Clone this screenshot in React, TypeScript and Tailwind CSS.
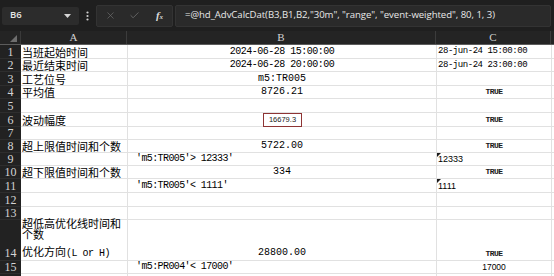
import React from 'react';
import { X, Check } from 'lucide-react';

type Row = {
  h: string;
  a?: React.ReactNode;
  b?: React.ReactNode;
  c?: React.ReactNode;
  end?: boolean;
  noNum?: boolean;
};

const cjk = "font-['Noto_Sans_CJK_SC',sans-serif]";
const mono = "font-['Liberation_Mono',monospace]";

// centred value in column B
const Val = ({ children }: { children: React.ReactNode }) => (
  <span className={`${mono} text-[10px] leading-[12px] w-full text-center text-black`}>{children}</span>
);

// date text in column B
const DateB = ({ children }: { children: React.ReactNode }) => (
  <span className={`${mono} text-[10px] leading-[12px] tracking-[-0.5px] w-full text-center text-black`}>{children}</span>
);

// condition text in column B
const Cond = ({ children }: { children: React.ReactNode }) => (
  <span className={`${mono} text-[10px] leading-[12px] tracking-[-0.6px] pl-[8px] text-black`}>{children}</span>
);

const DateC = ({ children }: { children: React.ReactNode }) => (
  <span className={`${mono} text-[9px] leading-[11px] tracking-[-0.45px] pl-[1px] text-black`}>{children}</span>
);

const True = () => (
  <span className={`${mono} text-[8px] leading-[10px] font-bold tracking-[-0.5px] w-full text-center text-[#1a1a1a]`}>TRUE</span>
);

// number stored as text, with the small error mark
const Flagged = ({ children }: { children: React.ReactNode }) => (
  <span className="relative w-full h-full flex items-end">
    <span className="absolute left-0 top-0 w-0 h-0 border-t-[4px] border-t-[#1a1a1a] border-r-[4px] border-r-transparent" />
    <span className="font-['Liberation_Sans',sans-serif] text-[9px] pl-[1px] leading-[11px] text-black">{children}</span>
  </span>
);

const rows: Row[] = [
  { h: 'h-[14px]', a: '当班起始时间', b: <DateB>2024-06-28 15:00:00</DateB>, c: <DateC>28-jun-24 15:00:00</DateC> },
  { h: 'h-[13px]', a: '最近结束时间', b: <DateB>2024-06-28 20:00:00</DateB>, c: <DateC>28-jun-24 23:00:00</DateC> },
  { h: 'h-[14px]', a: '工艺位号', b: <Val>m5:TR005</Val> },
  { h: 'h-[13px]', a: '平均值', b: <Val>8726.21</Val>, c: <True /> },
  { h: 'h-[14px]' },
  {
    h: 'h-[14px]',
    a: '波动幅度',
    b: (
      <span className="w-full flex justify-center">
        <span className="ml-[1px] w-[39px] h-[14px] border-[1.5px] border-[#8e3434] flex items-center justify-center font-['Liberation_Sans',sans-serif] text-[7.5px] text-[#222]">
          16679.3
        </span>
      </span>
    ),
    c: <True />,
  },
  { h: 'h-[13px]' },
  { h: 'h-[13px]', a: '超上限值时间和个数', b: <Val>5722.00</Val>, c: <True /> },
  { h: 'h-[13px]', b: <Cond>'m5:TR005'&gt; 12333'</Cond>, c: <Flagged>12333</Flagged> },
  { h: 'h-[13px]', a: '超下限值时间和个数', b: <Val>334</Val>, c: <True /> },
  { h: 'h-[14px]', b: <Cond>'m5:TR005'&lt; 1111'</Cond>, c: <Flagged>1111</Flagged> },
  { h: 'h-[14px]' },
  { h: 'h-[13px]' },
  {
    h: 'h-[41px]',
    end: true,
    a: (
      <span className="flex flex-col justify-end h-full">
        <span className="leading-[11px]">超低高优化线时间和</span>
        <span className="leading-[11px]">个数</span>
        <span className="leading-[13px] mt-[5px]">
          优化方向<span className={`${mono} text-[10px] tracking-[-0.5px]`}>(L or H)</span>
        </span>
      </span>
    ),
    b: <Val>28800.00</Val>,
    c: <True />,
  },
  {
    h: 'h-[13px]',
    b: <Cond>'m5:PR004'&lt; 17000'</Cond>,
    c: <span className="font-['Liberation_Sans',sans-serif] text-[8.5px] leading-[11px] w-full text-center text-black">17000</span>,
  },
  { h: 'h-[13px]', noNum: true },
];

const TopBar = () => (
  <div className="h-[31px] bg-[#1f1f1f] flex items-center">
    {/* Name box */}
    <div className="ml-[2px] w-[77px] h-[18px] bg-[#2c2c2c] rounded-[2px] flex items-center pl-[8px] pr-[8px]">
      <span className="font-['Open_Sans',sans-serif] text-[9.5px] font-semibold text-[#e6e6e6]">B6</span>
      <svg className="ml-auto" width="7" height="4" viewBox="0 0 7 4">
        <path d="M0 0h7L3.5 4z" fill="#d6d6d6" />
      </svg>
    </div>
    {/* More */}
    <div className="w-[17px] flex justify-center">
      <svg width="3" height="10" viewBox="0 0 3 10">
        <circle cx="1.5" cy="1.5" r="1.1" fill="#cfcfcf" />
        <circle cx="1.5" cy="5" r="1.1" fill="#cfcfcf" />
        <circle cx="1.5" cy="8.5" r="1.1" fill="#cfcfcf" />
      </svg>
    </div>
    {/* Cancel / enter / fx */}
    <div className="w-[77px] h-[22px] bg-[#2a2a2a] border border-[#333] rounded-[2px] flex items-center">
      <div className="w-[25px] flex justify-center pl-[2px]">
        <X size={11} strokeWidth={1.5} color="#6c6c6c" />
      </div>
      <div className="w-[25px] flex justify-center">
        <Check size={11} strokeWidth={1.8} color="#6c6c6c" />
      </div>
      <div className="w-[25px] flex justify-center">
        <span className="font-['Liberation_Serif',serif] italic font-bold text-[11px] text-[#dadada] leading-none">
          f<span className="text-[7px]">x</span>
        </span>
      </div>
    </div>
    {/* Formula input */}
    <div className="ml-[2px] w-[376px] h-[22px] bg-[#2a2a2a] border border-[#333] rounded-[2px] flex items-center pl-[9px] overflow-hidden">
      <span className="font-['Open_Sans',sans-serif] text-[9.6px] tracking-[-0.05px] text-[#e8e8e8] whitespace-nowrap">
        =@hd_AdvCalcDat(B3,B1,B2,"30m", "range", "event-weighted", 80, 1, 3)
      </span>
    </div>
  </div>
);

const HeaderRow = () => (
  <div className="h-[14px] flex bg-[#242424] border-b border-[#5c5c5c]">
    <div className="w-[21px] relative border-r border-[#3a3a3a]">
      <svg className="absolute right-[3px] bottom-[2px]" width="7" height="7" viewBox="0 0 7 7">
        <path d="M7 0v7H0z" fill="#6e6e6e" />
      </svg>
    </div>
    <div className="w-[106px] border-r border-[#3c3c3c] flex items-center justify-center font-['Liberation_Serif',serif] text-[11px] text-[#d2d2d2] leading-none">A</div>
    <div className="w-[309px] border-r border-[#3c3c3c] flex items-center justify-center font-['Liberation_Serif',serif] text-[11px] text-[#d2d2d2] leading-none">B</div>
    <div className="w-[115px] border-r border-[#3c3c3c] flex items-center justify-center font-['Liberation_Serif',serif] text-[11px] text-[#d2d2d2] leading-none">C</div>
    <div className="flex-1" />
  </div>
);

export default function App() {
  return (
    <div className="w-[554px] h-[276px] overflow-hidden bg-white">
      <TopBar />
      <HeaderRow />
      {rows.map((r, i) => (
        <div key={i} className={`flex ${r.h}`}>
          <div
            className={`w-[21px] shrink-0 bg-[#222] border-b border-[#2e2e2e] flex justify-center font-['Liberation_Serif',serif] text-[12px] text-[#d4d4d4] leading-[12px] ${r.end ? 'items-end pb-[1px]' : 'items-center'}`}
          >
            {r.noNum ? null : i + 1}
          </div>
          <div
            className={`w-[107px] shrink-0 border-r border-b border-[#e1e1e1] flex pl-[1px] ${cjk} text-[11px] text-black leading-[12px] whitespace-nowrap ${r.end ? 'items-end' : 'items-center'}`}
          >
            {r.a}
          </div>
          <div
            className={`w-[309px] shrink-0 border-r border-b border-[#e1e1e1] flex whitespace-nowrap ${r.end ? 'items-end pb-[1px]' : 'items-center'}`}
          >
            {r.b}
          </div>
          <div
            className={`w-[115px] shrink-0 border-r border-b border-[#e1e1e1] flex whitespace-nowrap ${r.end ? 'items-end pb-[1px]' : 'items-center'}`}
          >
            {r.c}
          </div>
          <div className="flex-1 border-b border-[#e1e1e1]" />
        </div>
      ))}
    </div>
  );
}
